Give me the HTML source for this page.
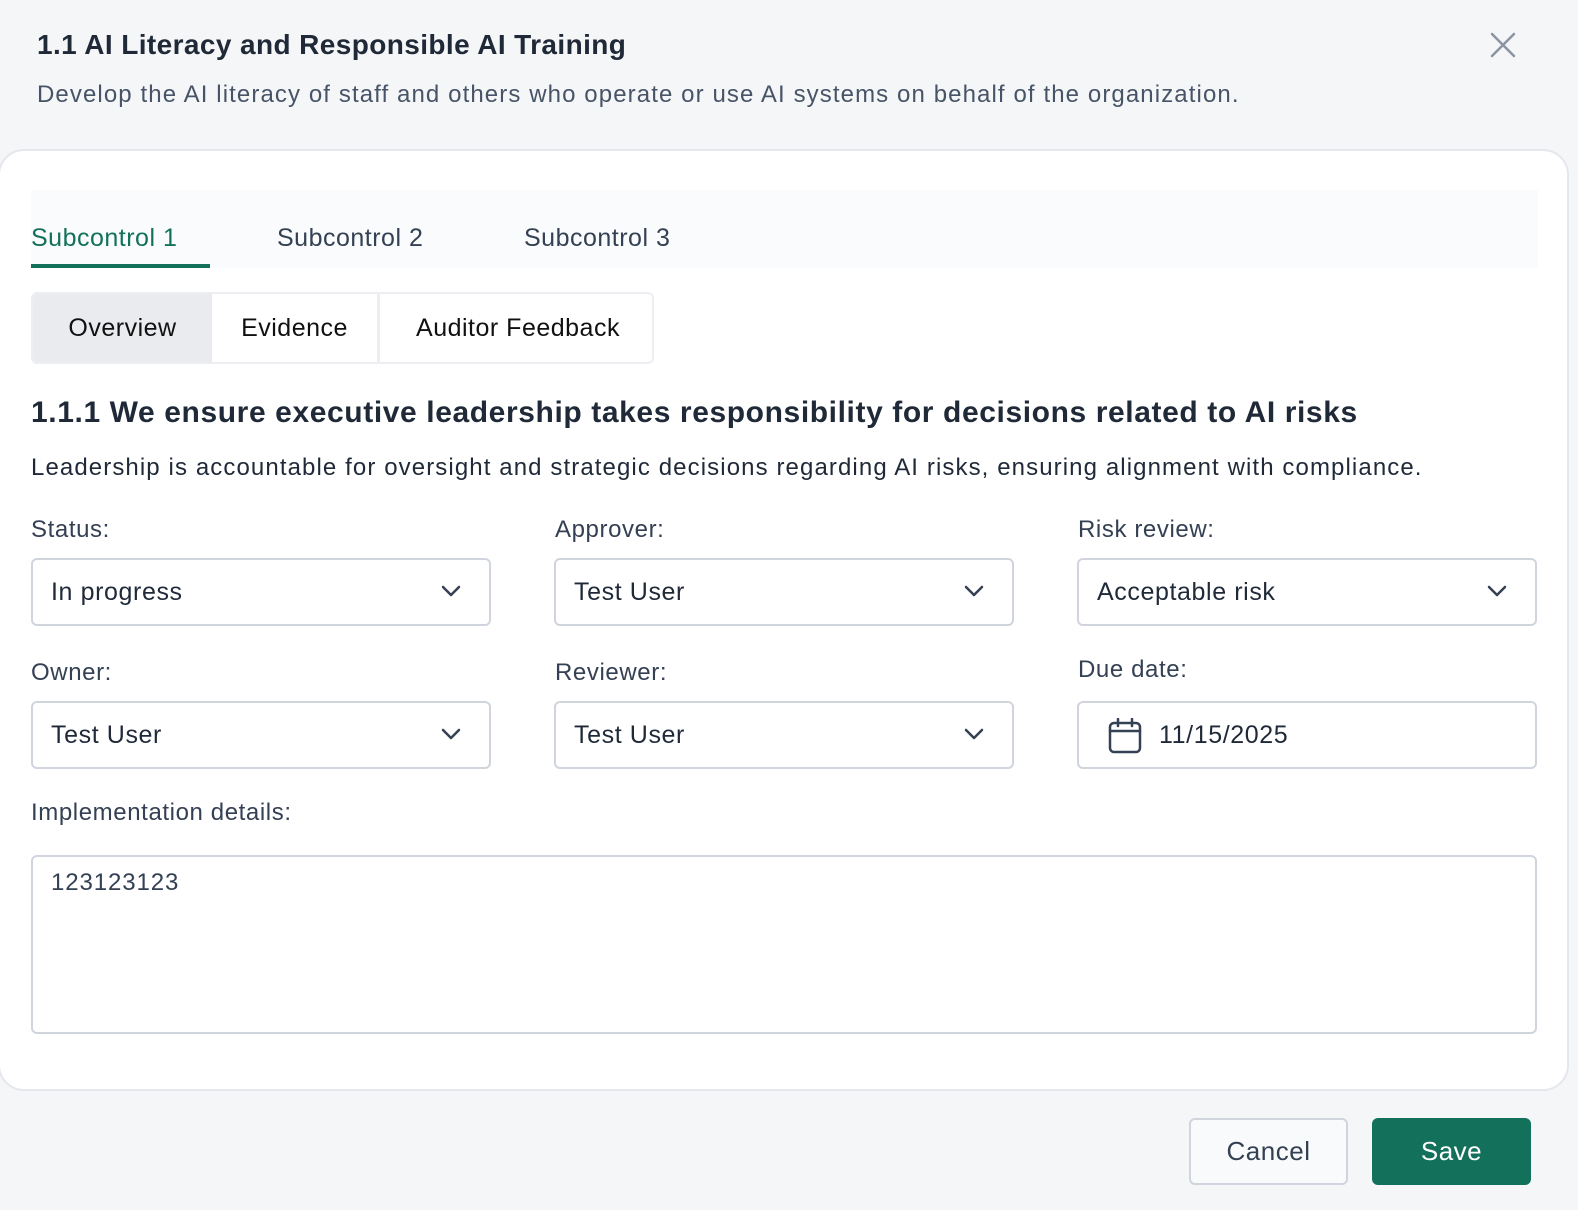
<!DOCTYPE html>
<html style="overflow:hidden"><head><meta charset="utf-8"><style>
*{box-sizing:border-box;margin:0;padding:0}
html,body{width:1578px;height:1210px;overflow:hidden}
body{background:#f5f6f8;font-family:"Liberation Sans",sans-serif;position:relative;color:#1f2937;letter-spacing:0.9px}
.abs{position:absolute;white-space:nowrap}
.panel{position:absolute;left:-2px;top:149px;width:1571px;height:942px;background:#fff;border:2px solid #e4e7ec;border-radius:26px}
.tabs{position:absolute;left:31px;top:190px;width:1507px;height:78px;background:#fafbfc}
.tab{position:absolute;top:224px;font-size:25px;color:#344054;letter-spacing:0.5px}
.seg{position:absolute;left:31px;top:292px;width:623px;height:72px;border:2px solid #eceef1;border-radius:6px;overflow:hidden}
.seg div{position:absolute;top:0;height:68px;line-height:68px;font-size:25px;color:#111;text-align:center;letter-spacing:0.5px}
.lbl{position:absolute;font-size:24px;color:#344054;letter-spacing:0.6px}
.sel{position:absolute;width:460px;height:68px;border:2px solid #d0d5dd;border-radius:6px;font-size:25px;line-height:64px;padding-left:18px;color:#1f2937;letter-spacing:0.6px}
.sel svg{position:absolute;right:28px;top:24px}
.btn{position:absolute;top:1118px;height:67px;border-radius:6px;font-size:26px;line-height:63px;text-align:center;letter-spacing:0.5px}
</style></head><body>
<div class="abs" style="left:37px;top:29px;font-size:28px;font-weight:bold;color:#1f2937;letter-spacing:0.4px">1.1 AI Literacy and Responsible AI Training</div>
<div class="abs" style="left:37px;top:81px;font-size:24px;color:#475467;letter-spacing:1.1px">Develop the AI literacy of staff and others who operate or use AI systems on behalf of the organization.</div>
<svg class="abs" style="left:1490px;top:32px" width="26" height="26" viewBox="0 0 26 26"><path d="M2 2L24 24M24 2L2 24" stroke="#8a94a3" stroke-width="2.5" stroke-linecap="round"/></svg>
<div class="panel"></div>
<div class="tabs"></div>
<div class="tab" style="left:31px;color:#13715b">Subcontrol 1</div>
<div class="abs" style="left:31px;top:264px;width:179px;height:4px;background:#13715b"></div>
<div class="tab" style="left:277px">Subcontrol 2</div>
<div class="tab" style="left:524px">Subcontrol 3</div>
<div class="seg">
<div style="left:0;width:179px;background:#eaebef">Overview</div>
<div style="left:179px;width:168px;border-right:3px solid #eceef1">Evidence</div>
<div style="left:350px;width:270px">Auditor Feedback</div>
</div>
<div class="abs" style="left:31px;top:396px;font-size:30px;font-weight:bold;color:#1f2937;letter-spacing:0.6px">1.1.1 We ensure executive leadership takes responsibility for decisions related to AI risks</div>
<div class="abs" style="left:31px;top:454px;font-size:24px;color:#1f2937;letter-spacing:1.1px">Leadership is accountable for oversight and strategic decisions regarding AI risks, ensuring alignment with compliance.</div>
<div class="lbl" style="left:31px;top:516px">Status:</div>
<div class="lbl" style="left:555px;top:516px">Approver:</div>
<div class="lbl" style="left:1078px;top:516px">Risk review:</div>
<div class="sel" style="left:31px;top:558px">In progress<svg width="20" height="14" viewBox="0 0 20 14"><path d="M2 3l8 8 8-8" fill="none" stroke="#344054" stroke-width="2.5" stroke-linecap="round" stroke-linejoin="round"/></svg></div>
<div class="sel" style="left:554px;top:558px">Test User<svg width="20" height="14" viewBox="0 0 20 14"><path d="M2 3l8 8 8-8" fill="none" stroke="#344054" stroke-width="2.5" stroke-linecap="round" stroke-linejoin="round"/></svg></div>
<div class="sel" style="left:1077px;top:558px">Acceptable risk<svg width="20" height="14" viewBox="0 0 20 14"><path d="M2 3l8 8 8-8" fill="none" stroke="#344054" stroke-width="2.5" stroke-linecap="round" stroke-linejoin="round"/></svg></div>
<div class="lbl" style="left:31px;top:659px">Owner:</div>
<div class="lbl" style="left:555px;top:659px">Reviewer:</div>
<div class="lbl" style="left:1078px;top:656px">Due date:</div>
<div class="sel" style="left:31px;top:701px">Test User<svg width="20" height="14" viewBox="0 0 20 14"><path d="M2 3l8 8 8-8" fill="none" stroke="#344054" stroke-width="2.5" stroke-linecap="round" stroke-linejoin="round"/></svg></div>
<div class="sel" style="left:554px;top:701px">Test User<svg width="20" height="14" viewBox="0 0 20 14"><path d="M2 3l8 8 8-8" fill="none" stroke="#344054" stroke-width="2.5" stroke-linecap="round" stroke-linejoin="round"/></svg></div>
<div class="sel" style="left:1077px;top:701px;padding-left:80px">11/15/2025</div>
<svg class="abs" style="left:1108px;top:718px" width="34" height="36" viewBox="0 0 34 36"><rect x="2" y="5" width="30" height="29" rx="4" fill="none" stroke="#344054" stroke-width="2.5"/><path d="M2 13h30M10 1v7M24 1v7" stroke="#344054" stroke-width="2.5" stroke-linecap="round"/></svg>
<div class="lbl" style="left:31px;top:799px">Implementation details:</div>
<div class="abs" style="left:31px;top:855px;width:1506px;height:179px;border:2px solid #d0d5dd;border-radius:6px;padding:12px 18px;font-size:24px;color:#344054">123123123</div>
<div class="btn" style="left:1189px;width:159px;border:2px solid #d0d5dd;background:#f9fafb;color:#344054">Cancel</div>
<div class="btn" style="left:1372px;width:159px;background:#13715b;color:#fff;line-height:67px">Save</div>
</body></html>
